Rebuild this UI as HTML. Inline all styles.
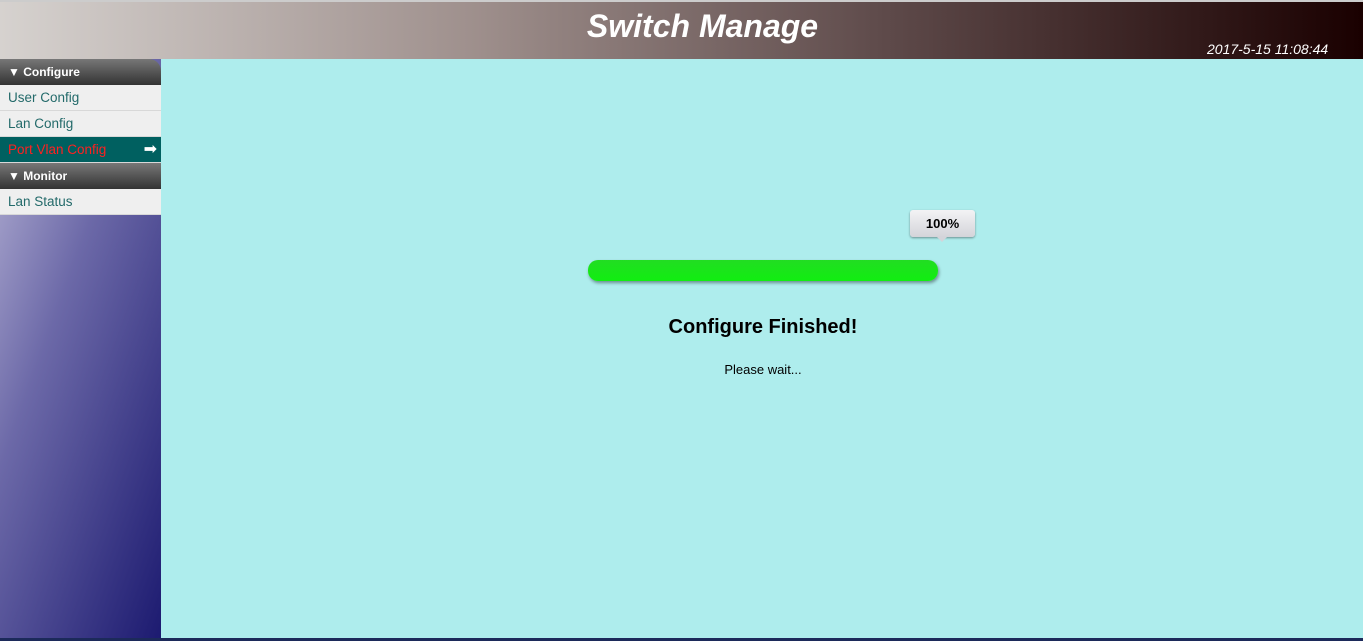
<!DOCTYPE html>
<html><head><style>
*{margin:0;padding:0;box-sizing:border-box}
body{width:1363px;height:641px;overflow:hidden;background:#aeeded;font-family:"Liberation Sans",sans-serif;position:relative}
#hd{position:absolute;left:0;top:0;width:1363px;height:59px;border-top:2px solid #ccc;background:linear-gradient(to right,#d6d2cf 0%,#9e8f8c 35%,#5e4a4a 65%,#1a0000 100%)}
#hd h1{position:absolute;left:0;width:1405px;top:6px;text-align:center;color:#fff;font-style:italic;font-weight:bold;font-size:32px}
#dt{position:absolute;left:1207px;top:39px;color:#fff;font-style:italic;font-size:14px}
#sb{position:absolute;left:0;top:59px;width:161px;height:582px;background:linear-gradient(110deg,#bbb8d8 0%,#6c69a8 40%,#1c1a70 100%)}
.h{height:26px;background:linear-gradient(#777,#333);color:#fff;font-weight:bold;font-size:12px;line-height:26px;padding-left:8px}
.h1{border-top-right-radius:12px}
.i{height:26px;background:#efefef;border-bottom:1px solid #d8d8d8;color:#236a6a;font-size:13.5px;line-height:26px;padding-left:8px}
.a{background:#006060;color:#ff2020;position:relative}
.a span{position:absolute;right:4px;top:0;color:#fff;font-size:16px}
#bar{position:absolute;left:588px;top:260px;width:350px;height:21px;border-radius:10px;background:linear-gradient(#22dd22,#11ee11);box-shadow:1px 2px 3px rgba(0,0,0,.4)}
#tip{position:absolute;left:910px;top:210px;width:65px;height:27px;border-radius:3px;background:linear-gradient(#f3f3f5,#d4d4da);box-shadow:0 1px 2px rgba(0,0,0,.4);text-align:center;line-height:27px;font-weight:bold;font-size:13px}
#tip:after{content:"";position:absolute;left:27px;bottom:-5px;border:5px solid transparent;border-top-color:#d4d4da;border-bottom:0}
#t1{position:absolute;left:588px;width:350px;top:316px;text-align:center;font-weight:bold;font-size:20px}
#t2{position:absolute;left:588px;width:350px;top:362px;text-align:center;font-size:13px}
#bt{position:absolute;left:0;top:638px;width:1363px;height:3px;background:#1c2a5a}
</style></head><body>
<div id="hd"><h1>Switch Manage</h1><div id="dt">2017-5-15 11:08:44</div></div>
<div id="sb">
<div class="h h1">▼ Configure</div>
<div class="i">User Config</div>
<div class="i">Lan Config</div>
<div class="i a">Port Vlan Config<span>➡</span></div>
<div class="h">▼ Monitor</div>
<div class="i">Lan Status</div>
</div>
<div id="tip">100%</div>
<div id="bar"></div>
<div id="t1">Configure Finished!</div>
<div id="t2">Please wait...</div>
<div id="bt"></div>
</body></html>
